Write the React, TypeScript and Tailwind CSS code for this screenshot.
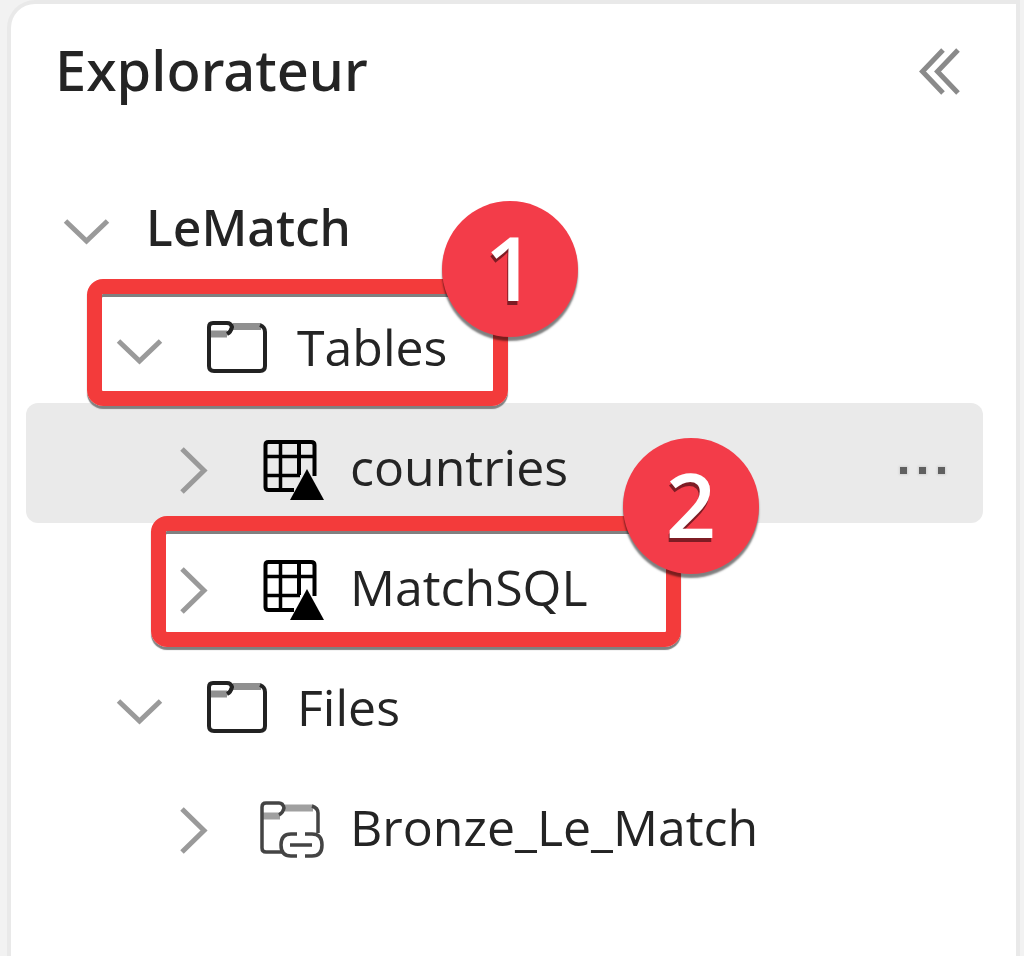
import { type ReactNode } from "react";

function ChevronDown() {
  return (
    <svg viewBox="0 0 48 48" className="size-12 shrink-0" fill="none" stroke="#9a9a9a" strokeWidth="5" aria-hidden="true">
      <path d="M3.500 14 L24.500 34 L45.500 14" />
    </svg>
  );
}

function ChevronRight() {
  return (
    <svg viewBox="0 0 48 48" className="size-12 shrink-0" fill="none" stroke="#9a9a9a" strokeWidth="5" aria-hidden="true">
      <path d="M14 2 L36 23.500 L14 45" />
    </svg>
  );
}

function FolderIcon() {
  return (
    <svg viewBox="0 0 64 64" className="size-16 shrink-0" fill="none" aria-hidden="true">
      <path d="M26 7.500 H54 M3 15 H20" stroke="#909090" strokeWidth="7" />
      <path
        d="M6 4 H20 Q24 4 25 8 Q24 13 20 15 M53 6 Q58 8 58 13 V47 Q58 52 53 52 H7 Q2 52 2 47 V8 Q2 4 6 4"
        stroke="#222"
        strokeWidth="4"
      />
    </svg>
  );
}

function TableIcon() {
  return (
    <svg viewBox="0 0 64 64" className="size-16 shrink-0" fill="none" aria-hidden="true">
      <path d="M34 51 H8.5 Q5.500 51 5.500 48 V6 Q5.500 3 8.500 3 H51 Q54.500 3 54.500 6 V37" stroke="#000" strokeWidth="4" />
      <path d="M20.500 3 V51 M5 17.500 H55 M5 36.500 H40" stroke="#000" strokeWidth="3.500" />
      <path d="M39 3 V36" stroke="#000" strokeWidth="4" />
      <path d="M47 30 L64 61 H30 Z" fill="#000" />
    </svg>
  );
}

function LinkedFolderIcon() {
  return (
    <svg viewBox="0 0 64 64" className="size-16 shrink-0" fill="none" aria-hidden="true">
      <path d="M25 9 H53 M3 17 H20" stroke="#a0a0a0" strokeWidth="7" />
      <path
        d="M22 53 H6 Q2 53 2 49 V8 Q2 4 6 4 H19 Q23 4 24 9 Q23 14 19 16 M52 7 Q58 9 58 14 V34"
        stroke="#444"
        strokeWidth="3.500"
      />
      <path d="M37 35 H31 Q21 35 21 46 Q21 57 31 57 H37 M45 35 H52 Q62 35 62 46 Q62 57 52 57 H45 M30 46 H52" stroke="#444" strokeWidth="3.500" />
    </svg>
  );
}

function Callout({ value, className }: { value: string; className: string }) {
  return (
    <span
      className={`absolute z-10 flex size-[136px] items-center justify-center rounded-full bg-[#f33c49] pb-1 text-[88px] leading-none font-semibold text-white shadow-[0_4px_2px_rgba(0,0,0,0.5)] [text-shadow:-1px_4px_0_#7d1c24] ${className}`}
    >
      {value}
    </span>
  );
}

function Outline({ className }: { className: string }) {
  return (
    <span
      className={`pointer-events-none absolute rounded-2xl border-[15px] border-[#f33b3b] shadow-[0_3px_1px_#808080,inset_0_3px_0_#808080] ${className}`}
    />
  );
}

type RowProps = {
  label: string;
  expanded: boolean;
  indent: string;
  icon?: ReactNode;
  root?: boolean;
  active?: boolean;
  children?: ReactNode;
};

function TreeRow({ label, expanded, indent, icon, root, active, children }: RowProps) {
  return (
    <li className={`relative flex h-[120px] items-center rounded-xl ${active ? "bg-[#eaeaea]" : ""}`}>
      <button
        type="button"
        aria-expanded={expanded}
        className={`flex h-full min-w-0 flex-1 items-center pt-4 text-left ${root ? "gap-9" : "gap-11"} ${indent}`}
      >
        {expanded ? <ChevronDown /> : <ChevronRight />}
        <span className="flex items-center gap-[26px]">
          {icon}
          <span className={`pb-2 text-[50px] leading-[64px] whitespace-nowrap ${root ? "font-['Noto_Sans',sans-serif] font-medium" : ""}`}>{label}</span>
        </span>
      </button>
      {active && (
        <button type="button" aria-label="More options" className="mr-[38px] flex gap-3 pt-[14px]">
          <span className="size-[7px] bg-[#606060] shadow-[0_0_2px_1px_#d4d4d4]" />
          <span className="size-[7px] bg-[#606060] shadow-[0_0_2px_1px_#d4d4d4]" />
          <span className="size-[7px] bg-[#606060] shadow-[0_0_2px_1px_#d4d4d4]" />
        </button>
      )}
      {children}
    </li>
  );
}

export default function App() {
  return (
    <div className="min-h-screen bg-[#f2f2f2] pt-1 pr-2 pl-[11px] font-['Open_Sans','Noto_Sans',sans-serif] text-[#242424]">
      <aside className="min-h-[952px] rounded-tl-3xl bg-white shadow-[0_0_0_4px_#e9e9e9]">
        <header className="flex h-[159px] items-start justify-between pt-7 pr-[55px] pl-11">
          <h1 className="font-['Noto_Sans',sans-serif] text-[56px] leading-[74px] font-medium">Explorateur</h1>
          <button type="button" aria-label="Collapse" className="pt-4">
            <svg viewBox="0 0 42 48" className="h-12 w-[42px]" fill="none" stroke="#8a8a8a" strokeWidth="5" aria-hidden="true">
              <path d="M24 2 L3.500 23.500 L24 45 M39 2 L18.500 23.500 L39 45" />
            </svg>
          </button>
        </header>
        <ul className="pr-[33px] pl-[15px]">
          <TreeRow label="LeMatch" expanded indent="pl-9" root />
          <TreeRow label="Tables" expanded indent="pl-[89px]" icon={<FolderIcon />}>
            <Outline className="top-[-4px] left-[61px] z-10 h-[127px] w-[421px]" />
            <Callout value="1" className="top-[-82px] left-[416px]" />
          </TreeRow>
          <TreeRow label="countries" expanded={false} indent="pl-[142px]" icon={<TableIcon />} active />
          <TreeRow label="MatchSQL" expanded={false} indent="pl-[142px]" icon={<TableIcon />}>
            <Outline className="top-[-7px] left-[125px] z-10 h-[131px] w-[530px]" />
            <Callout value="2" className="top-[-85px] left-[597px]" />
          </TreeRow>
          <TreeRow label="Files" expanded indent="pl-[89px]" icon={<FolderIcon />} />
          <TreeRow label="Bronze_Le_Match" expanded={false} indent="pl-[142px]" icon={<LinkedFolderIcon />} />
        </ul>
      </aside>
    </div>
  );
}
